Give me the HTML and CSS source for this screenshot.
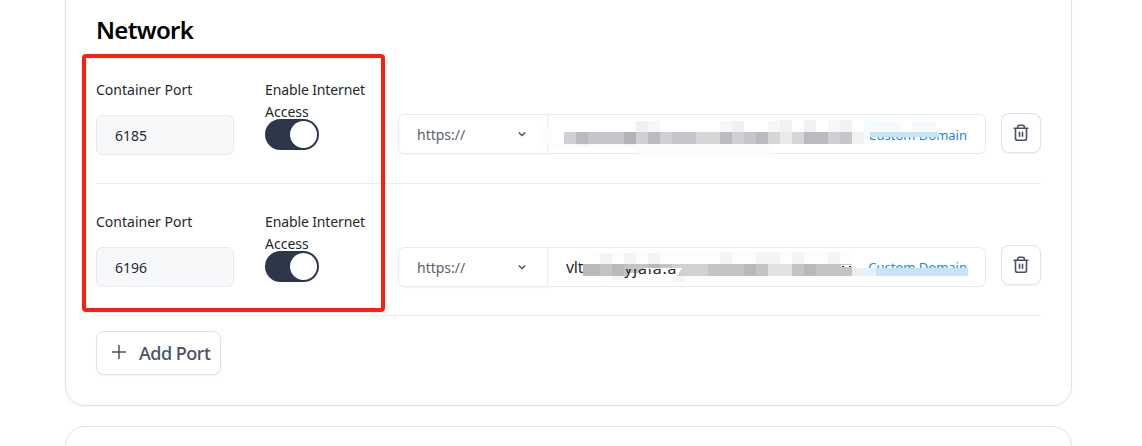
FILE: index.html
```html
<!DOCTYPE html>
<html lang="en">
<head>
<meta charset="utf-8">
<title>Network</title>
<link rel="stylesheet" href="styles.css">
</head>
<body>
<main class="page">
  <section class="card">
    <h2 class="title"><span>Network</span></h2>
    <div class="row">
      <div class="port"><label class="label"><span class="lp">Container Port</span></label><div class="input"><span>6185</span></div></div>
      <div class="access"><div class="label"><span class="le">Enable Internet</span><br><span class="la">Access</span></div><div class="switch"><i class="knob"></i></div></div>
      <div class="address">
        <div class="protocol"><span class="scheme">https://</span><svg class="chev" viewBox="0 0 10 8"><path d="M1.800 2.400 5 5.500 8.200 2.400"/></svg></div>
        <div class="domain"><span class="custom">Custom Domain</span></div>
        <svg class="mosaic" width="588" height="40" viewBox="398 114 588 40" shape-rendering="crispEdges">
          <path fill="#fcfcfc" d="M540 127h12v18h-12zM552 144h87v3h-87zM639 144h133v12H639z"/>
          <path fill="#f6f7f7" d="M648 121h12v11h-12zM720 121h12v11h-12zM768 121h12v11h-12zM828 120h12v12h-12zM576 144h12v3h-12zM624 144h12v3h-12z"/>
          <path fill="#f1f1f1" d="M636 121h12v11h-12zM732 121h12v11h-12zM780 120h12v12h-12zM804 120h12v12h-12zM840 120h12v12h-12zM852 132h12v12h-12z"/>
          <path fill="#fff" d="M864 127h75v5h-75z"/>
          <path fill="#f4fafd" d="M864 120l12 2h24v10h-36zM912 122h24v10h-24zM864 132h6v6l-6 6z"/>
          <path fill="#c8e3f6" d="M870 132h69v5h-69z"/>
          <path fill="#cfcfd4" d="M564 132h12v12h-12zM636 132h12v12h-12zM660 132h12v12h-12zM732 132h12v12h-12zM828 132h12v12h-12z"/>
          <path fill="#bababf" d="M576 132h12v12h-12zM648 132h12v12h-12zM720 132h12v12h-12zM756 132h12v12h-12zM804 132h24v12h-24z"/>
          <path fill="#c5c5ca" d="M588 132h36v12h-36zM672 132h24v12h-24zM744 132h12v12h-12zM840 132h12v12h-12z"/>
          <path fill="#b2b2b7" d="M624 132h12v12h-12z"/>
          <path fill="#d6d6d8" d="M696 132h24v12h-24zM768 132h12v12h-12zM792 132h12v12h-12z"/>
          <path fill="#e8e9eb" d="M780 132h12v12h-12z"/>
        </svg>
      </div>
      <button class="delete"><svg viewBox="0 0 20 20"><path d="M3.200 5.200h13.600M6.700 5V3.700Q6.700 2.300 8.200 2.300h3.600q1.500 0 1.500 1.400V5M4.500 5.200v10q0 2.100 2.100 2.100h6.800q2.100 0 2.100-2.100v-10M8.500 9.300v4M11.500 9.300v4"/></svg></button>
    </div>
    <div class="row second">
      <div class="port"><label class="label"><span class="lp">Container Port</span></label><div class="input"><span>6196</span></div></div>
      <div class="access"><div class="label"><span class="le">Enable Internet</span><br><span class="la">Access</span></div><div class="switch"><i class="knob"></i></div></div>
      <div class="address">
        <div class="protocol"><span class="scheme">https://</span><svg class="chev" viewBox="0 0 10 8"><path d="M1.800 2.400 5 5.500 8.200 2.400"/></svg></div>
        <div class="domain"><span class="host">vlt</span><span class="host-end">yjala.a</span><span class="custom">Custom Domain</span></div>
        <svg class="mosaic" width="588" height="40" viewBox="398 247 588 40" shape-rendering="crispEdges">
          <path fill="#fcfdfd" d="M580 256l20-4h252v12H580zM600 276h27l-18 5h-9zM677 276h291v6H677z"/>
          <path fill="#f3f4f4" d="M600 254h12v10h-12zM624 253h12v11h-12zM648 253h12v11h-12zM720 252h12v12h-12zM756 252h12v12h-12zM768 252h12v12h-12zM792 252h12v12h-12zM828 252h12v12h-12zM612 276h12v4h-12zM672 276h12v6h-12z"/>
          <path fill="#b8b8bd" d="M583 264h17v12h-17zM612 264h12v12h-12zM648 264h12v12h-12zM744 264h12v12h-12zM804 264h12v12h-12z"/>
          <path fill="#c3c3c8" d="M600 264h12v12h-12zM624 264h24v12h-24zM660 264h12v12h-12zM708 264h36v12h-36zM756 264h12v12h-12zM792 264h12v12h-12zM816 264h24v12h-24zM840 264h12v12h-12z"/>
          <path fill="#d1d1d4" d="M672 264h12v12h-12zM684 264h24v12h-24z"/>
          <path fill="#fff" d="M627 273h10l8-5h37l-5 8h-50z"/>
          <path fill="#e1e1e2" d="M768 264h24v12h-24z"/>
          <path fill="#efefef" d="M852 268h12v8h-12z"/>
          <path fill="#fff" d="M841 265h11v2h-11z"/>
          <path fill="#24282c" d="M842 266h2v1h-2zM849 266h2v1h-2z"/>
          <path fill="#e5f2fb" d="M864 268h12v8h-12z"/>
          <path fill="#c8e3f6" d="M876 268h92v8h-92z"/>
        </svg>
      </div>
      <button class="delete"><svg viewBox="0 0 20 20"><path d="M3.200 5.200h13.600M6.700 5V3.700Q6.700 2.300 8.200 2.300h3.600q1.500 0 1.500 1.400V5M4.500 5.200v10q0 2.100 2.100 2.100h6.800q2.100 0 2.100-2.100v-10M8.500 9.300v4M11.500 9.300v4"/></svg></button>
    </div>
    <button class="add"><svg viewBox="0 0 14 14"><path d="M7 0v14M0 7h14"/></svg><span>Add Port</span></button>
    <div class="highlight"></div>
  </section>
  <section class="card next"></section>
</main>
</body>
</html>
```
FILE: styles.css
```css
* { box-sizing: border-box; }
body { margin: 0; background: #fff; font-family: "Noto Sans", "Open Sans", sans-serif; font-size: 14px; color: #24282c; }
.page { width: 1142px; height: 446px; overflow: hidden; padding: 0 70px 0 65px; display: flex; flex-direction: column; gap: 20px; }
.card { position: relative; flex: none; width: 1007px; height: 426px; margin-top: -20px; padding: 33px 30px 0; border: 1px solid #dfe1e4; border-radius: 20px; box-shadow: 0 1px 2px #1018280c; }
.card.next { height: 100px; margin: 0; }
.title { margin: 0; height: 38px; line-height: 32px; font-size: 24px; font-weight: 600; letter-spacing: -.7px; color: #000; }
.title span { display: inline-block; }
.row { display: flex; width: 945px; height: 132px; border-bottom: 1px solid #e8ebf0; padding-top: 27px; }
.port { width: 168px; }
.label { display: block; height: 36px; line-height: 22px; white-space: nowrap; }
.le { letter-spacing: -.12px; }
.input { width: 138px; height: 40px; border: 1px solid #e8ebf0; border-radius: 6px; background: #f7f8fa; padding-left: 18px; line-height: 39px; }
.access { width: 134px; padding-left: 1px; }
.access .label { height: 40px; }
.switch { position: relative; z-index: 1; width: 54px; height: 31px; border-radius: 16px; background: #2d3748; display: flex; justify-content: flex-end; padding: 2px; }
.knob { width: 27px; height: 27px; border-radius: 50%; background: #fff; }
.address { position: relative; width: 588px; height: 40px; margin-top: 35px; display: flex; }
.second .address { margin-top: 36px; }
.protocol { width: 150px; border: 1px solid #e8ebf0; border-radius: 6px 0 0 6px; padding: 0 20px 0 18px; display: flex; align-items: center; justify-content: space-between; color: #5a606c; box-shadow: 0 1px 2px #1018280c; }
.chev { width: 10px; height: 8px; fill: none; stroke: #485264; stroke-width: 1.4; }
.domain { flex: 1; display: flex; align-items: center; border: 1px solid #e8ebf0; border-left: 0; border-radius: 0 6px 6px 0; padding: 2px 18px 0; }
.second .domain { padding-top: 0; }
.custom { margin-left: auto; font-size: 13px; color: #1b88d7; }
.host, .host-end { font-size: 16px; line-height: 22px; }
.host { letter-spacing: -.3px; }
.host-end { position: relative; z-index: 1; margin: 2px 0 0 41px; letter-spacing: .8px; clip-path: inset(12px 0 0 0); }
.mosaic { position: absolute; left: 0; top: 0; overflow: visible; }
button { font: inherit; background: #fff; border: 1px solid #dfe2ea; box-shadow: 0 1px 2px #1018280d; }
.delete { width: 40px; height: 40px; margin: 34px 0 0 15px; padding: 0 0 1px; border-radius: 8px; display: grid; place-items: center; }
.delete svg { width: 20px; height: 20px; fill: none; stroke: #485264; stroke-width: 1.6; stroke-linecap: round; }
.add { width: 125px; height: 44px; margin-top: 15px; padding: 0 0 0 15px; border-radius: 8px; display: flex; align-items: center; gap: 13px; font-size: 18px; font-weight: 500; letter-spacing: -.5px; color: #485264; white-space: nowrap; }
.add svg { width: 14px; height: 14px; margin-top: -2px; fill: none; stroke: #485264; stroke-width: 1.5; flex: none; }
.highlight { position: absolute; left: 16px; top: 73px; width: 303px; height: 258px; border: 4px solid #ff1d12; border-radius: 4px; z-index: 2; }
```
